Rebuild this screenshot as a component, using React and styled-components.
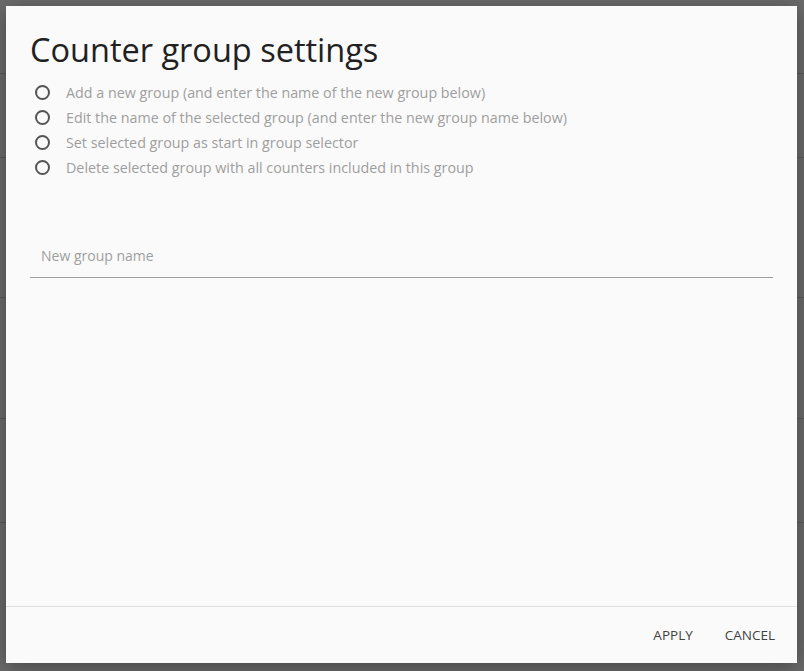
import styled, { createGlobalStyle } from 'styled-components';

const GlobalStyle = createGlobalStyle`
  html, body { margin: 0; padding: 0; }
  body {
    width: 804px;
    height: 671px;
    overflow: hidden;
    font-family: 'Open Sans', 'Noto Sans', sans-serif;
  }
`;

const Backdrop = styled.div`
  position: relative;
  width: 804px;
  height: 671px;
  background: #6b6b6b;
  overflow: hidden;
`;

const BgLine = styled.div`
  position: absolute;
  left: 0;
  right: 0;
  top: ${(p) => p.top}px;
  height: 1px;
  background: #5a5a5a;
`;

const Dialog = styled.div`
  position: absolute;
  left: 6px;
  top: 6px;
  width: 791px;
  height: 657px;
  background: #fafafa;
  box-shadow: 0 4px 20px rgba(0, 0, 0, 0.35);
  display: flex;
  flex-direction: column;
`;

const Body = styled.div`
  flex: 1;
  padding: 26px 24px 0 24px;
`;

const Title = styled.h2`
  margin: 0 0 12px 0;
  font-size: 32.5px;
  font-weight: 400;
  line-height: 36px;
  color: #212121;
`;

const RadioList = styled.div`
  display: flex;
  flex-direction: column;
`;

const RadioRow = styled.label`
  display: flex;
  align-items: center;
  height: 25px;
  padding-left: 5px;
  font-size: 14.3px;
  color: #9e9e9e;
`;

const Circle = styled.span`
  width: 11px;
  height: 11px;
  border: 2px solid #555;
  border-radius: 50%;
  margin-right: 16px;
  flex-shrink: 0;
`;

const Field = styled.div`
  margin-top: 53px;
  height: 44px;
  border-bottom: 1px solid #9e9e9e;
  display: flex;
  align-items: center;
  padding-left: 11px;
  font-size: 14px;
  color: #9e9e9e;
`;

const Footer = styled.div`
  height: 56px;
  border-top: 1px solid #e0e0e0;
  display: flex;
  justify-content: flex-end;
  align-items: center;
  gap: 4px;
  padding: 0 8px 0 0;
`;

const Button = styled.button`
  background: none;
  border: none;
  font-family: 'Open Sans', sans-serif;
  font-size: 13.5px;
  color: #424242;
  text-transform: uppercase;
  padding: 0 14px;
  height: 36px;
`;

const options = [
  'Add a new group (and enter the name of the new group below)',
  'Edit the name of the selected group (and enter the new group name below)',
  'Set selected group as start in group selector',
  'Delete selected group with all counters included in this group',
];

export default function App() {
  return (
    <>
      <GlobalStyle />
      <Backdrop>
        {[73, 157, 297, 418, 522].map((t) => (
          <BgLine key={t} top={t} />
        ))}
        <Dialog>
          <Body>
            <Title>Counter group settings</Title>
            <RadioList>
              {options.map((o) => (
                <RadioRow key={o}>
                  <Circle />
                  {o}
                </RadioRow>
              ))}
            </RadioList>
            <Field>New group name</Field>
          </Body>
          <Footer>
            <Button>Apply</Button>
            <Button>Cancel</Button>
          </Footer>
        </Dialog>
      </Backdrop>
    </>
  );
}
